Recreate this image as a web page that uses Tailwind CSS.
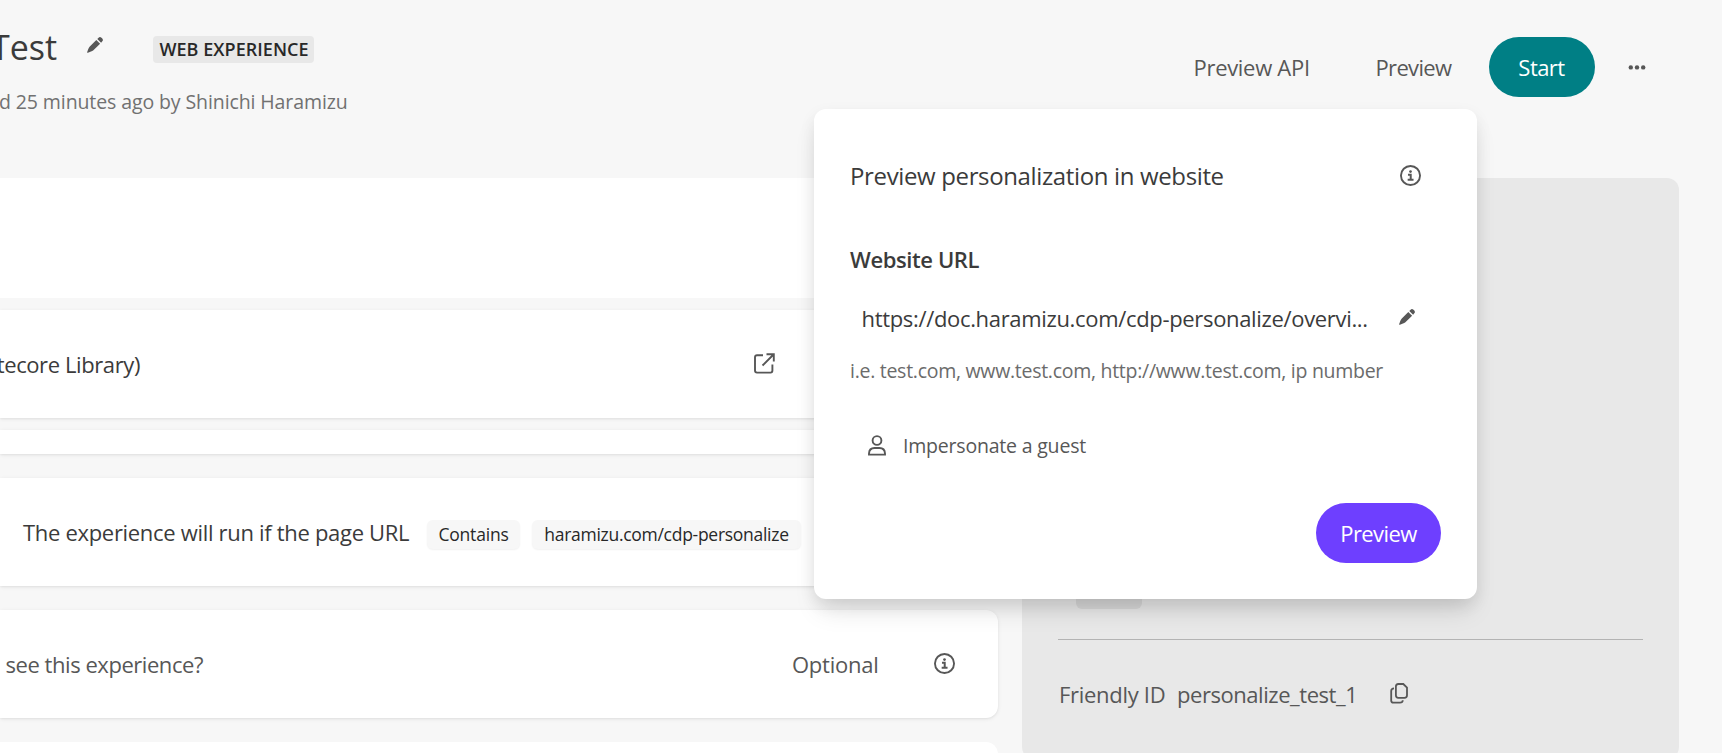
<!DOCTYPE html>
<html lang="en">
<head>
<meta charset="utf-8">
<title>Test - Web experience</title>
<script src="https://cdn.jsdelivr.net/npm/@tailwindcss/browser@4"></script>
</head>
<body class="relative h-[753px] w-[1722px] overflow-hidden bg-[#f7f7f7] font-['Open_Sans','Noto_Sans',sans-serif] text-[22px] leading-8 text-[#3b3b3b]">

<svg class="hidden">
  <symbol id="pencil" viewBox="0 0 16 16"><path fill="currentColor" d="M9.3 2.9 13.1 6.7 6.4 13.2Q5.3 14.2 4 14.6L.9 15.8Q0 16 .2 15.1L1.3 12Q1.8 10.5 2.8 9.5ZM10.3 1.9 11.6.7Q13-.5 14.5.8L15.3 1.6Q16.5 2.9 15.3 4.3L14.1 5.7Z"/></symbol>
  <symbol id="info" viewBox="0 0 20 20"><circle cx="10" cy="10" r="9.1" fill="none" stroke="currentColor" stroke-width="1.8"/><circle cx="10" cy="6.2" r="1.3" fill="currentColor"/><path fill="none" stroke="currentColor" stroke-width="1.9" d="M7.6 9.4H10.2V14M7.3 14.1H12.9"/></symbol>
</svg>

<header class="flex h-[178px] justify-between">
  <div class="pt-[27px]">
    <div class="flex h-10 items-center">
      <h1 class="-ml-[9px] w-[67px] text-[34px] leading-10 whitespace-nowrap">Test</h1>
      <svg class="mt-[-4px] ml-[29px] size-4 text-[#575757]"><use href="#pencil"/></svg>
      <span class="mt-[5px] ml-[50px] flex h-[27px] w-[161px] items-center justify-center rounded bg-[#e8e8e8] pb-px pl-px text-[18px] font-semibold tracking-[0.04px] whitespace-nowrap text-[#282828]">WEB EXPERIENCE</span>
    </div>
    <p class="-ml-px pt-[19px] text-[19.5px] tracking-[-0.1px] whitespace-nowrap text-[#717171]">d 25 minutes ago by Shinichi Haramizu</p>
  </div>
  <nav class="mr-[76px] flex h-[60px] translate-y-[37px] items-center text-[#575757]">
    <span class="w-[182px] tracking-[-0.3px]">Preview API</span>
    <span class="w-[113px] tracking-[-0.66px]">Preview</span>
    <button class="h-[60px] w-[106px] rounded-[30px] bg-[#007f85] font-medium tracking-[-0.54px] text-white">Start</button>
    <svg class="ml-[33.5px] h-5 w-[18px]" viewBox="0 0 18 20" fill="currentColor"><circle cx="2.8" cy="10.4" r="2.2"/><circle cx="9" cy="10.4" r="2.2"/><circle cx="15.2" cy="10.4" r="2.2"/></svg>
  </nav>
</header>

<main class="flex h-[575px] overflow-hidden">
  <section class="flex w-[998px] shrink-0 flex-col">
    <div class="h-[120px] shrink-0 rounded-tr-xl bg-white"></div>
    <div class="mt-3 flex h-[108px] shrink-0 items-center bg-white shadow-[0_1px_4px_rgba(0,0,0,0.08),0_1px_2px_rgba(0,0,0,0.04)]">
      <span class="-ml-[5px] flex w-[145px] justify-end tracking-[-0.4px] whitespace-nowrap">tecore Library)</span>
      <svg class="-mt-px ml-[614px] size-[21px] text-[#575757]" viewBox="0 0 21 21" fill="none" stroke="currentColor" stroke-width="1.9"><path d="M9 2.2H3Q1 2.2 1 4.2V17.6Q1 19.6 3 19.6H16.6Q18.4 19.6 18.4 17.6V11.5M12.5 1.2H19.8V8.5M19.5 1.5 8.5 12.5"/></svg>
    </div>
    <div class="mt-3 h-6 shrink-0 rounded-br-xl bg-white shadow-[0_1px_4px_rgba(0,0,0,0.08),0_1px_2px_rgba(0,0,0,0.04)]"></div>
    <div class="mt-6 flex h-[108px] shrink-0 items-center rounded-r-xl bg-white shadow-[0_1px_4px_rgba(0,0,0,0.08),0_1px_2px_rgba(0,0,0,0.04)]">
      <span class="ml-[23px] w-[404px] tracking-[-0.31px] whitespace-nowrap">The experience will run if the page URL</span>
      <span class="mt-[5px] h-[29px] w-[93px] rounded-md bg-[#f7f7f7] text-center text-[17.5px] leading-[29px] tracking-[-0.2px] text-[#282828] shadow-[0_1px_2px_rgba(0,0,0,0.06)]">Contains</span>
      <span class="mt-[5px] ml-3 h-[29px] w-[269px] rounded-md bg-[#f7f7f7] text-center text-[17.5px] leading-[29px] tracking-[-0.28px] text-[#282828] shadow-[0_1px_2px_rgba(0,0,0,0.06)]">haramizu.com/cdp-personalize</span>
    </div>
    <div class="mt-6 flex h-[108px] shrink-0 items-center rounded-r-xl bg-white text-[#575757] shadow-[0_1px_4px_rgba(0,0,0,0.08),0_1px_2px_rgba(0,0,0,0.04)]">
      <span class="ml-[5.5px] w-[786.5px] tracking-[-0.45px]">see this experience?</span>
      <span class="w-[142px] tracking-[-0.25px]">Optional</span>
      <svg class="-mt-px size-[21px]"><use href="#info"/></svg>
    </div>
    <div class="mt-6 h-[108px] shrink-0 rounded-tr-xl bg-white"></div>
  </section>

  <aside class="ml-6 h-[581px] w-[657px] rounded-xl bg-[#e8e8e8] px-9 pt-[401px] text-[#575757]">
    <div class="ml-[18px] h-[30px] w-[66px] rounded-md bg-[#d8d8d8]"></div>
    <div class="mt-[30px] flex h-[109px] items-center border-t border-[#b3b3b3]">
      <span class="w-[119px] pl-px tracking-[-0.3px]">Friendly ID</span>
      <span class="w-[213px] tracking-[-0.45px]">personalize_test_1</span>
      <svg class="-mt-0.5 h-[21px] w-[18px]" viewBox="0 0 18 21" fill="none" stroke="currentColor" stroke-width="1.8"><path d="M8.3 1H13.3L17 4.7V12.3Q17 14.8 14.5 14.8H8.3Q5.9 14.8 5.9 12.3V3.4Q5.9 1 8.3 1ZM4 5.4Q1.2 5.4 1.2 8V17.5Q1.2 19.7 3.4 19.7H10Q12.6 19.7 12.8 17.3"/></svg>
    </div>
  </aside>
</main>

<div class="absolute top-[109px] left-[814px] flex h-[490px] w-[663px] flex-col rounded-xl bg-white px-9 pt-[51px] shadow-[0_16px_26px_-6px_rgba(0,0,0,0.13),0_6px_16px_rgba(0,0,0,0.08)]">
  <div class="flex h-8 items-center justify-between pr-5">
    <h2 class="text-[24px] tracking-[-0.36px]">Preview personalization in website</h2>
    <svg class="-mt-0.5 size-[21px] text-[#575757]"><use href="#info"/></svg>
  </div>
  <h3 class="mt-[51px] font-semibold tracking-[-0.4px]">Website URL</h3>
  <div class="mt-[27px] flex h-8 items-center pl-[11.5px]">
    <span class="w-[537.5px] tracking-[-0.33px]">https://doc.haramizu.com/cdp-personalize/overvi...</span>
    <svg class="-mt-0.5 size-4 text-[#575757]"><use href="#pencil"/></svg>
  </div>
  <p class="mt-[21px] text-[19.5px] tracking-[-0.28px] text-[#6b6b6b]">i.e. test.com, www.test.com, http://www.test.com, ip number</p>
  <div class="mt-[43px] flex h-8 items-center pl-[18px] text-[19.5px] text-[#575757]">
    <svg class="-mt-0.5 h-[21px] w-[18px]" viewBox="0 0 18 21" fill="none" stroke="currentColor" stroke-width="1.9"><circle cx="9" cy="5.5" r="4.4"/><path d="M1 19.6V18.5Q1.3 13 6.5 13H11.5Q16.7 13 17 18.5V19.6Z"/></svg>
    <span class="ml-[17px] tracking-[-0.2px]">Impersonate a guest</span>
  </div>
  <button class="mt-[41px] h-[60px] w-[125px] self-end rounded-[30px] bg-[#6e3fff] font-medium tracking-[-0.57px] text-white">Preview</button>
</div>
</body>
</html>
